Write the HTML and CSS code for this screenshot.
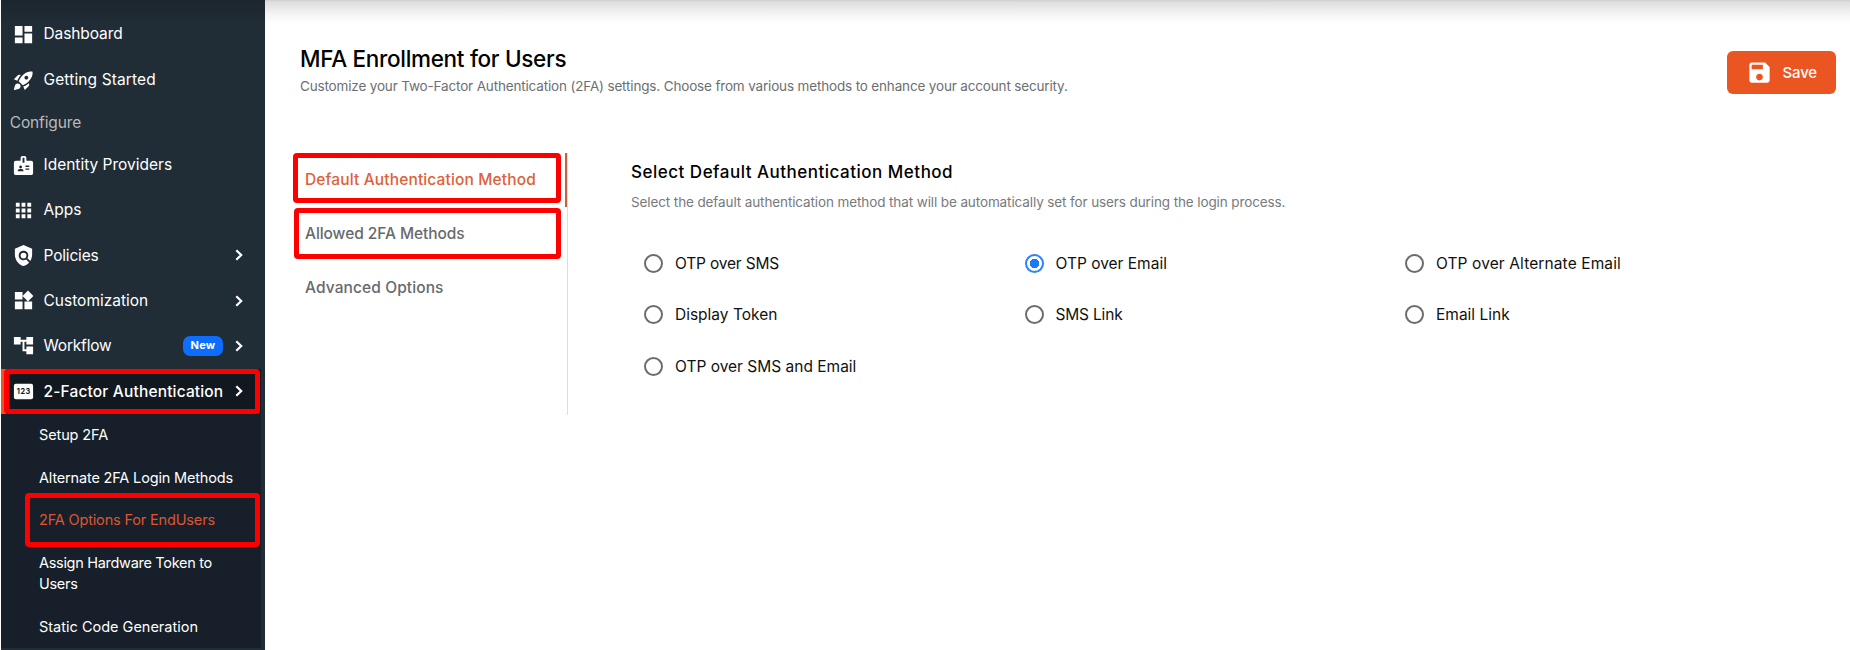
FILE: index.html
```html
<!DOCTYPE html>
<html lang="en">
<head>
<meta charset="utf-8">
<title>MFA Enrollment for Users</title>
<link rel="stylesheet" href="styles.css">
</head>
<body>
<div class="app">
  <nav class="sidebar">
    <a class="item item-lead"><svg class="icon low" viewBox="0 0 24 24"><path d="M3 13h8V3H3v10zm0 8h8v-6H3v6zm10 0h8V11h-8v10zm0-18v6h8V3h-8z"/></svg><span class="label t-dashboard">Dashboard</span></a>
    <a class="item"><svg class="icon low" viewBox="0 0 24 24"><path d="M9.19 6.35c-2.04 2.29-3.44 5.58-3.57 5.89L2 10.69l4.05-4.05c.47-.47 1.15-.68 1.81-.55l1.33.26zM11.17 17s3.74-1.55 5.89-3.7c5.4-5.4 4.5-9.62 4.21-10.57-.95-.3-5.17-1.19-10.57 4.21C8.55 9.09 7 12.83 7 12.83L11.17 17zm6.48-2.19c-2.29 2.04-5.58 3.44-5.89 3.57L13.31 22l4.05-4.05c.47-.47.68-1.15.55-1.81l-.26-1.33zM9 18c0 .83-.34 1.58-.88 2.12C6.94 21.3 2 22 2 22s.7-4.94 1.88-6.12C4.42 15.34 5.17 15 6 15c1.66 0 3 1.34 3 3zm4-9c0-1.1.9-2 2-2s2 .9 2 2-.9 2-2 2-2-.9-2-2z"/></svg><span class="label t-getting">Getting Started</span></a>
    <div class="section">Configure</div>
    <a class="item"><svg class="icon low" viewBox="0 0 24 24"><path d="M20 7h-5V4c0-1.1-.9-2-2-2h-2c-1.1 0-2 .9-2 2v3H4c-1.1 0-2 .9-2 2v11c0 1.1.9 2 2 2h16c1.1 0 2-.9 2-2V9c0-1.1-.9-2-2-2zM9 12c.83 0 1.5.67 1.5 1.5S9.83 15 9 15s-1.5-.67-1.5-1.5S8.17 12 9 12zm3 6H6v-.75c0-1 2-1.5 3-1.5s3 .5 3 1.5V18zm1-9h-2V4h2v5zm5 7.5h-4V15h4v1.5zm0-3h-4V12h4v1.5z"/></svg><span class="label">Identity Providers</span></a>
    <a class="item"><svg class="icon low" viewBox="0 0 24 24"><path d="M4 8h4V4H4v4zm6 12h4v-4h-4v4zm-6 0h4v-4H4v4zm0-6h4v-4H4v4zm6 0h4v-4h-4v4zm6-10v4h4V4h-4zm-6 4h4V4h-4v4zm6 6h4v-4h-4v4zm0 6h4v-4h-4v4z"/></svg><span class="label">Apps</span></a>
    <a class="item"><svg class="icon" viewBox="0 0 24 24"><path d="M21 5l-9-4-9 4v6c0 5.55 3.84 10.74 9 12 2.3-.56 4.33-1.9 5.88-3.71l-3.12-3.12c-1.94 1.29-4.58 1.07-6.29-.64-1.95-1.95-1.95-5.12 0-7.07 1.95-1.95 5.12-1.95 7.07 0 1.71 1.71 1.92 4.35.64 6.29l2.9 2.9C20.29 15.69 21 13.38 21 11V5z"/><circle cx="12" cy="12" r="3"/></svg><span class="label t-policies">Policies</span><svg class="chevron" viewBox="0 0 8 12"><path d="M1.3 1.2 6.2 6 1.3 10.8"/></svg></a>
    <a class="item"><svg class="icon" viewBox="0 0 24 24"><path d="M13 13v8h8v-8h-8zM3 21h8v-8H3v8zM3 3v8h8V3H3zm13.66-1.31L11 7.34 16.66 13l5.66-5.66-5.66-5.65z"/></svg><span class="label">Customization</span><svg class="chevron" viewBox="0 0 8 12"><path d="M1.3 1.2 6.2 6 1.3 10.8"/></svg></a>
    <a class="item"><svg class="icon" viewBox="0 0 24 24"><path d="M22 11V3h-7v3H9V3H2v8h7V8h2v10h4v3h7v-8h-7v3h-2V8h2v3z"/></svg><span class="label t-workflow">Workflow</span><span class="badge">New</span><svg class="chevron" viewBox="0 0 8 12"><path d="M1.3 1.2 6.2 6 1.3 10.8"/></svg></a>
    <a class="item item-active"><svg class="icon" viewBox="0 0 24 24"><rect x="2" y="4" width="20" height="16" rx="2"/><text class="pin-digits" x="12.3" y="14.7">123</text></svg><span class="label t-factor">2-Factor Authentication</span><svg class="chevron" viewBox="0 0 8 12"><path d="M1.3 1.2 6.2 6 1.3 10.8"/></svg><span class="mark mark-factor"></span></a>
    <div class="submenu">
      <a class="sub t-setup">Setup 2FA</a>
      <a class="sub t-alternate">Alternate 2FA Login Methods</a>
      <a class="sub sub-current t-options">2FA Options For EndUsers<span class="mark mark-options"></span></a>
      <a class="sub t-assign">Assign Hardware Token to Users</a>
      <a class="sub">Static Code Generation</a>
    </div>
  </nav>
  <main class="main">
    <header class="head">
      <div>
        <h1 class="title">MFA Enrollment for Users</h1>
        <p class="subtitle">Customize your Two-Factor Authentication (2FA) settings. Choose from various methods to enhance your account security.</p>
      </div>
      <button class="save"><svg class="save-icon" viewBox="0 0 24 24"><path d="M17 3H5c-1.11 0-2 .9-2 2v14c0 1.1.89 2 2 2h14c1.1 0 2-.9 2-2V7l-4-4zm-5 16c-1.66 0-3-1.34-3-3s1.34-3 3-3 3 1.34 3 3-1.34 3-3 3zm3-10H5V5h10v4z"/></svg>Save</button>
    </header>
    <div class="content">
      <div class="tabs">
        <a class="tab tab-active t-default">Default Authentication Method<span class="mark mark-default"></span></a>
        <a class="tab t-allowed">Allowed 2FA Methods<span class="mark mark-allowed"></span></a>
        <a class="tab t-advanced">Advanced Options</a>
      </div>
      <section class="panel">
        <h2 class="panel-title">Select Default Authentication Method</h2>
        <p class="panel-note">Select the default authentication method that will be automatically set for users during the login process.</p>
        <div class="options">
          <label class="option t-sms"><span class="radio"></span>OTP over SMS</label>
          <label class="option"><span class="radio radio-on"></span>OTP over Email</label>
          <label class="option t-altmail"><span class="radio"></span>OTP over Alternate Email</label>
          <label class="option"><span class="radio"></span>Display Token</label>
          <label class="option t-sms"><span class="radio"></span>SMS Link</label>
          <label class="option"><span class="radio"></span>Email Link</label>
          <label class="option"><span class="radio"></span>OTP over SMS and Email</label>
        </div>
      </section>
    </div>
  </main>
</div>
</body>
</html>
```
FILE: styles.css
```css
* { box-sizing: border-box; }
body {
  margin: 0;
  font-family: Inter, "Open Sans", sans-serif;
  background: #fff;
}
h1, h2, p { margin: 0; }

.app { display: flex; height: 650px; overflow: hidden; }

/* Sidebar */
.sidebar {
  flex: none;
  width: 264px;
  margin-left: 1px;
  padding-top: 11.3px;
  background: linear-gradient(#1b262e, #202c36 24px);
  color: #fff;
}
.item {
  position: relative;
  display: flex;
  align-items: center;
  height: 45.33px;
  padding: 0 22px 0 10.5px;
  font-size: 15.5px;
}
.icon { width: 23px; height: 23px; margin-right: 9px; fill: #fff; flex: none; }
.low { transform: translateY(1px); }
.label { flex: 1; white-space: nowrap; }
.chevron {
  width: 8px;
  height: 12px;
  flex: none;
  fill: none;
  stroke: #fff;
  stroke-width: 2.2;
}
.badge {
  width: 40px;
  height: 20px;
  margin-right: 12px;
  border-radius: 7px;
  background: #0d6efd;
  font-size: 11px;
  font-weight: 700;
  letter-spacing: .3px;
  line-height: 19px;
  text-align: center;
}
.section {
  height: 40px;
  padding-left: 8.7px;
  color: #b9babb;
  font-size: 15.5px;
  line-height: 41px;
  letter-spacing: -.12px;
}
.item-active {
  width: 260px;
  padding-right: 18px;
  background: #111820;
  font-weight: 500;
  box-shadow: inset 5px 0 #eb5424;
}
.pin-digits {
  fill: #111820;
  font: 700 7.6px Inter, sans-serif;
  letter-spacing: .5px;
  text-anchor: middle;
}
.submenu { width: 260px; background: #17202a; }
.sub {
  position: relative;
  display: block;
  padding: 10.2px 40px 11.2px 38px;
  font-size: 14.5px;
  line-height: 21.2px;
}
.t-alternate, .sub-current { white-space: nowrap; }
.sub-current { color: #dd5630; }

/* Red highlight frames */
.mark {
  position: absolute;
  border: 5px solid #fe0000;
  border-radius: 4px;
}
.mark-factor { left: 3px; top: .5px; width: 256px; height: 44.5px; }
.mark-options { left: 24px; top: -6px; width: 235px; height: 54px; }
.mark-default { left: -11.6px; top: 0; width: 268px; height: 49.5px; }
.mark-allowed { left: -11px; top: 1px; width: 267px; height: 50.5px; }

/* Main area */
.main {
  flex: 1;
  padding: 0 14px 0 35px;
  background: linear-gradient(#cfcfcf 0, #dedede 2px, #f5f5f5 15px, #fff 24px);
}
.head {
  display: flex;
  justify-content: space-between;
  align-items: flex-start;
  height: 153px;
  padding-top: 45px;
}
.title {
  color: #000;
  font-size: 22.5px;
  font-weight: 500;
  line-height: 28px;
  letter-spacing: -.3px;
}
.subtitle {
  margin-top: 3px;
  color: #6c6f72;
  font-size: 13.5px;
  line-height: 20px;
  letter-spacing: -.16px;
}
.save {
  display: flex;
  align-items: center;
  width: 109px;
  height: 43px;
  margin-top: 6px;
  padding: 0 0 0 18.5px;
  border: 0;
  border-radius: 6px;
  background: #ea5522;
  color: #fff;
  font: 500 15px Inter, sans-serif;
  letter-spacing: -.16px;
}
.save-icon { width: 27px; height: 27px; margin-right: 10px; fill: #fff; }

.content { display: flex; }
.tabs {
  width: 263px;
  height: 262px;
  margin-left: 5px;
  box-shadow: inset -1px 0 #dedede;
}
.tab {
  position: relative;
  display: block;
  height: 54px;
  color: #666a6d;
  font-size: 15.5px;
  font-weight: 500;
  line-height: 54px;
}
.tab-active { color: #dd6139; box-shadow: inset -2px 0 #c6613f; margin-right: 1px; }

.panel { flex: 1; padding: 7px 0 0 63px; }
.panel-title {
  font-size: 17px;
  font-weight: 500;
  line-height: 24px;
  letter-spacing: .5px;
}
.panel-note {
  margin-top: 8px;
  color: #777a7d;
  font-size: 13.5px;
  line-height: 20px;
  letter-spacing: -.11px;
}
.options {
  display: grid;
  grid-template-columns: repeat(3, 380.5px);
  grid-auto-rows: 51.6px;
  padding: 25.6px 0 0 13px;
}
.option {
  display: flex;
  align-items: center;
  color: #111;
  font-size: 15.5px;
}
.radio {
  position: relative;
  width: 19px;
  height: 19px;
  margin-right: 12px;
  border: 2px solid #6c6c6c;
  border-radius: 50%;
}
.radio-on {
  border-color: #2d82f5;
  background: radial-gradient(circle, #1a7bf8 4.5px, #fff 5px);
}

/* Per-label tracking */
.t-dashboard { letter-spacing: -.1px; }
.t-getting { letter-spacing: .13px; }
.t-policies { letter-spacing: -.18px; }
.t-workflow { letter-spacing: -.19px; }
.t-factor { letter-spacing: .16px; }
.t-setup { letter-spacing: -.12px; }
.t-alternate { letter-spacing: -.17px; }
.t-options { letter-spacing: -.16px; }
.t-assign { letter-spacing: -.3px; }
.t-default { letter-spacing: .14px; }
.t-allowed { letter-spacing: -.07px; }
.t-advanced { letter-spacing: .1px; }
.t-sms { letter-spacing: -.18px; }
.t-altmail { letter-spacing: .11px; }
```
